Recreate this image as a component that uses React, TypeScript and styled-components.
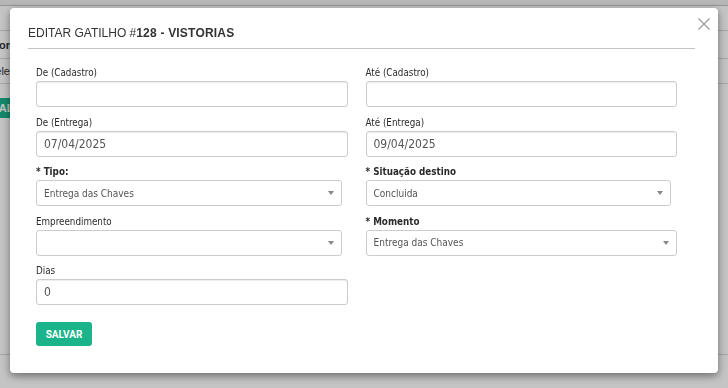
import React from "react";
import styled, { createGlobalStyle } from "styled-components";

const GlobalStyle = createGlobalStyle`
  html, body {
    margin: 0;
    padding: 0;
  }
  body {
    font-family: "Liberation Sans", Arial, sans-serif;
    background: #fff;
  }
  * {
    box-sizing: border-box;
  }
`;

const formFont = `"DejaVu Sans Condensed", "DejaVu Sans", Verdana, sans-serif`;

// page behind the modal
const Page = styled.div`
  height: 100vh;
  overflow: hidden;
  background: #fff;
`;

const TopStrip = styled.div`
  height: 6px;
  background: #ededed;
  border-bottom: 1px solid #c2c2c2;
`;

const Toolbar = styled.div`
  height: 24px;
`;

const TableRow = styled.div<{ h: number; line?: boolean }>`
  height: ${({ h }) => h}px;
  border-top: ${({ line }) => (line ? "1px solid #d9d9d9" : "none")};
  display: flex;
  align-items: center;
`;

const EdgeCell = styled.div<{ bold?: boolean }>`
  width: 10px;
  overflow: hidden;
  display: flex;
  justify-content: flex-end;
  white-space: nowrap;
  font-size: 11px;
  font-weight: ${({ bold }) => (bold ? "bold" : "normal")};
  color: #333;
`;

const EdgeButton = styled.div`
  width: 35px;
  height: 20px;
  background: #1ab38a;
  overflow: hidden;
`;

const EdgeButtonText = styled.div`
  display: flex;
  justify-content: flex-end;
  align-items: center;
  height: 100%;
  color: #fff;
  font-size: 11px;
  font-weight: bold;
  white-space: nowrap;

  span {
    flex-shrink: 0;
  }
`;

const Spacer = styled.div`
  flex: 1;
`;

// overlay + modal
const Backdrop = styled.div`
  position: fixed;
  inset: 0;
  background: rgba(0, 0, 0, 0.23);
  display: flex;
  justify-content: center;
  align-items: flex-start;
  padding-top: 8px;
`;

const Modal = styled.div`
  width: 708px;
  background: #fff;
  border-radius: 4px;
  box-shadow: 0 3px 9px rgba(0, 0, 0, 0.45);
`;

const Header = styled.div`
  display: flex;
  align-items: flex-start;
  padding: 0 8px 0 18px;
`;

const TitleBar = styled.div`
  flex: 1;
  padding: 18px 0 8px 0;
  border-bottom: 1px solid #c4c4c4;
`;

const Title = styled.h4`
  margin: 0;
  font-size: 12px;
  line-height: 14px;
  font-weight: normal;
  color: #333;

  strong {
    font-weight: bold;
    letter-spacing: 0.2px;
  }
`;

const CloseButton = styled.button`
  margin: 10px 0 0 3px;
  width: 12px;
  height: 12px;
  padding: 0;
  border: none;
  background: none;
  display: flex;
  cursor: pointer;
`;

const Body = styled.div`
  padding: 17px 41px 27px 26px;
`;

const Grid = styled.div`
  display: grid;
  grid-template-columns: 1fr 1fr;
  column-gap: 18px;
`;

const Field = styled.div`
  margin-bottom: 8.5px;
`;

const Label = styled.label<{ bold?: boolean }>`
  display: block;
  margin-bottom: 1px;
  font-family: ${formFont};
  font-size: 9.75px;
  line-height: 14px;
  font-weight: ${({ bold }) => (bold ? "bold" : "normal")};
  color: #2b2b2b;
`;

const TextInput = styled.input`
  display: block;
  width: 100%;
  height: 26px;
  padding: 0 7px;
  border: 1px solid #cccccc;
  border-radius: 3px;
  box-shadow: inset 0 1px 1px rgba(0, 0, 0, 0.075);
  font-family: ${formFont};
  font-size: 12px;
  color: #555;
  background: #fff;
  outline: none;
`;

const SelectBox = styled.div<{ narrow?: boolean }>`
  width: ${({ narrow }) => (narrow ? "calc(100% - 6px)" : "100%")};
  height: 26px;
  padding: 0 7px;
  border: 1px solid #cccccc;
  border-radius: 3px;
  display: flex;
  align-items: center;
  justify-content: space-between;
  font-family: ${formFont};
  font-size: 10px;
  color: #555;
  background: #fff;
`;

const SaveButton = styled.button`
  margin-top: 8.5px;
  width: 56px;
  height: 24px;
  border: none;
  border-radius: 3px;
  background: #1ab38a;
  color: #fff;
  font-family: Roboto, "Liberation Sans", sans-serif;
  font-size: 10px;
  font-weight: bold;
  padding: 0;
  cursor: pointer;
`;

const Caret = () => (
  <svg width="6" height="4" viewBox="0 0 6 4">
    <path d="M0 0h6L3 4z" fill="#888" />
  </svg>
);

const Select = ({ value, narrow }: { value?: string; narrow?: boolean }) => (
  <SelectBox narrow={narrow}>
    <span>{value}</span>
    <Caret />
  </SelectBox>
);

const App = () => {
  return (
    <>
      <GlobalStyle />
      <Page>
        <TopStrip />
        <Toolbar />
        <TableRow h={28} line>
          <EdgeCell bold>Setor</EdgeCell>
        </TableRow>
        <TableRow h={25} line>
          <EdgeCell>Sele</EdgeCell>
        </TableRow>
        <TableRow h={48} line>
          <EdgeButton>
            <EdgeButtonText>
              <span>SALVAR</span>
            </EdgeButtonText>
          </EdgeButton>
        </TableRow>
        <Spacer />
        <TableRow h={223} />
        <TableRow h={40} line />
      </Page>

      <Backdrop>
        <Modal>
          <Header>
            <TitleBar>
              <Title>
                EDITAR GATILHO #<strong>128 - VISTORIAS</strong>
              </Title>
            </TitleBar>
            <CloseButton aria-label="Fechar">
              <svg width="12" height="12" viewBox="0 0 12 12">
                <path
                  d="M0.5 0.5L11.5 11.5M11.5 0.5L0.5 11.5"
                  stroke="#a0a0a0"
                  strokeWidth="1.4"
                />
              </svg>
            </CloseButton>
          </Header>

          <Body>
            <Grid>
              <Field>
                <Label>De (Cadastro)</Label>
                <TextInput defaultValue="" />
              </Field>
              <Field>
                <Label>Até (Cadastro)</Label>
                <TextInput defaultValue="" />
              </Field>

              <Field>
                <Label>De (Entrega)</Label>
                <TextInput defaultValue="07/04/2025" />
              </Field>
              <Field>
                <Label>Até (Entrega)</Label>
                <TextInput defaultValue="09/04/2025" />
              </Field>

              <Field>
                <Label bold>* Tipo:</Label>
                <Select value="Entrega das Chaves" narrow />
              </Field>
              <Field>
                <Label bold>* Situação destino</Label>
                <Select value="Concluida" narrow />
              </Field>

              <Field>
                <Label>Empreendimento</Label>
                <Select narrow />
              </Field>
              <Field>
                <Label bold>* Momento</Label>
                <Select value="Entrega das Chaves" />
              </Field>

              <Field>
                <Label>Dias</Label>
                <TextInput defaultValue="0" />
              </Field>
            </Grid>
            <SaveButton>SALVAR</SaveButton>
          </Body>
        </Modal>
      </Backdrop>
    </>
  );
};

export default App;
